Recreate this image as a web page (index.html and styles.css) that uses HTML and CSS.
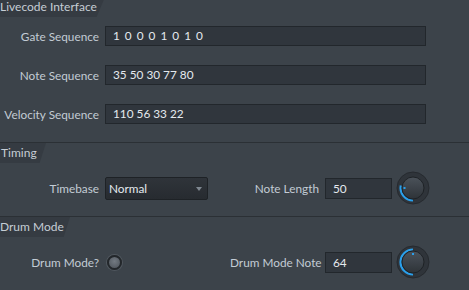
FILE: index.html
```html
<!DOCTYPE html>
<html>
<head>
<meta charset="utf-8">
<link rel="stylesheet" href="styles.css">
</head>
<body>
<div class="page">
  <section class="sec sec-first">
    <div class="tab tab-live">Livecode Interface</div>
    <div class="rows">
      <div class="row"><label class="lbl">Gate Sequence</label><div class="field wide gate">1 0 0 0 1 0 1 0</div></div>
      <div class="row"><label class="lbl">Note Sequence</label><div class="field wide">35 50 30 77 80</div></div>
      <div class="row"><label class="lbl">Velocity Sequence</label><div class="field wide">110 56 33 22</div></div>
    </div>
  </section>
  <section class="sec sec-timing">
    <div class="tab tab-timing">Timing</div>
    <div class="row2">
      <div class="left">
        <label class="lbl">Timebase</label>
        <div class="select"><span>Normal</span><span class="arrow"></span></div>
      </div>
      <div class="right">
        <label class="lbl2">Note Length</label>
        <div class="field small">50</div>
        <svg class="knob" width="34" height="34" viewBox="0 0 34 34">
          <defs>
            <linearGradient id="kg1" x1="0" y1="0" x2="0" y2="1">
              <stop offset="0" stop-color="#4b525a"/>
              <stop offset="1" stop-color="#2e3338"/>
            </linearGradient>
          </defs>
          <circle cx="17" cy="17" r="16" fill="#2f343a" stroke="#262a2f" stroke-width="1"/>
          <path d="M17 29.5 A12.5 12.5 0 0 1 4.8 14.5" fill="none" stroke="#2a9fea" stroke-width="2.2"/>
          <circle cx="17" cy="17" r="11" fill="url(#kg1)" stroke="#1e2226" stroke-width="1"/>
          <rect x="7.5" y="16" width="2" height="2" fill="#2a9fea"/>
        </svg>
      </div>
    </div>
  </section>
  <section class="sec sec-drum">
    <div class="tab tab-drum">Drum Mode</div>
    <div class="row2">
      <div class="left">
        <label class="lbl">Drum Mode?</label>
        <span class="radio"></span>
      </div>
      <div class="right">
        <label class="lbl2">Drum Mode Note</label>
        <div class="field small">64</div>
        <svg class="knob" width="34" height="34" viewBox="0 0 34 34">
          <defs>
            <linearGradient id="kg2" x1="0" y1="0" x2="0" y2="1">
              <stop offset="0" stop-color="#4b525a"/>
              <stop offset="1" stop-color="#2e3338"/>
            </linearGradient>
          </defs>
          <circle cx="17" cy="17" r="16" fill="#2f343a" stroke="#262a2f" stroke-width="1"/>
          <path d="M17 29.5 A12.5 12.5 0 0 1 17 4.5" fill="none" stroke="#2a9fea" stroke-width="2.2"/>
          <circle cx="17" cy="17" r="11" fill="url(#kg2)" stroke="#1e2226" stroke-width="1"/>
          <rect x="16" y="8" width="2" height="2" fill="#2a9fea"/>
        </svg>
      </div>
    </div>
  </section>
</div>
</body>
</html>
```
FILE: styles.css
```css
html, body {
  margin: 0;
  padding: 0;
  background: #3c434a;
  overflow: hidden;
}
body {
  width: 469px;
  height: 290px;
  font-family: Lato, "Open Sans", sans-serif;
  font-size: 11.8px;
  color: #c3ccd5;
  white-space: nowrap;
}
.page {
  display: flex;
  flex-direction: column;
}
.sec {
  border-top: 1px solid #2b3035;
}
.sec-first {
  margin-top: -4px;
  height: 145px;
}
.sec-timing {
  height: 73px;
}
.sec-drum {
  height: 80px;
}
.tab {
  height: 20px;
  background: #353b42;
  color: #c5cdd5;
  padding-left: 0;
  box-sizing: border-box;
  font-size: 12px;
  line-height: 19px;
}
.tab-live {
  width: 105px;
  clip-path: polygon(0 0, 100% 0, 92% 100%, 0 100%);
}
.tab-timing {
  width: 46px;
  clip-path: polygon(0 0, 100% 0, 86% 100%, 0 100%);
  padding-left: 1px;
}
.tab-drum {
  width: 70px;
  clip-path: polygon(0 0, 100% 0, 91% 100%, 0 100%);
}
.rows {
  display: flex;
  flex-direction: column;
  gap: 19px;
  padding-top: 9px;
}
.row {
  display: flex;
  align-items: center;
  gap: 6px;
}
.lbl {
  width: 99px;
  text-align: right;
  flex: none;
}
.lbl2 {
  width: 89px;
  text-align: right;
  flex: none;
}
.field {
  height: 20px;
  box-sizing: border-box;
  background: #30363d;
  border: 1px solid #22272c;
  color: #e4e9ee;
  padding-left: 7px;
  line-height: 18px;
}
.wide {
  width: 321px;
}
.gate {
  letter-spacing: 1px;
}
.small {
  width: 67px;
  height: 21px;
  line-height: 19px;
}
.row2 {
  display: flex;
  align-items: center;
  padding-top: 8px;
}
.left {
  width: 230px;
  display: flex;
  align-items: center;
  gap: 6px;
  flex: none;
}
.right {
  display: flex;
  align-items: center;
  gap: 6px;
}
.select {
  width: 103px;
  height: 23px;
  box-sizing: border-box;
  background: linear-gradient(#2f343a, #272b30);
  border: 1px solid #1e2226;
  border-radius: 2px;
  display: flex;
  align-items: center;
  justify-content: space-between;
  padding: 0 5px 0 3px;
  color: #e4e9ee;
}
.arrow {
  width: 0;
  height: 0;
  border-left: 3.5px solid transparent;
  border-right: 3.5px solid transparent;
  border-top: 4px solid #7f8891;
  margin-top: 1px;
}
.radio {
  width: 11px;
  height: 11px;
  border-radius: 50%;
  border: 2px solid #23272b;
  background: radial-gradient(circle at 50% 40%, #737a82, #4c5259);
  margin-left: 2px;
  box-shadow: 0 0 0 1px #50575e;
}
.knob {
  display: block;
  margin-left: -2px;
}
```
